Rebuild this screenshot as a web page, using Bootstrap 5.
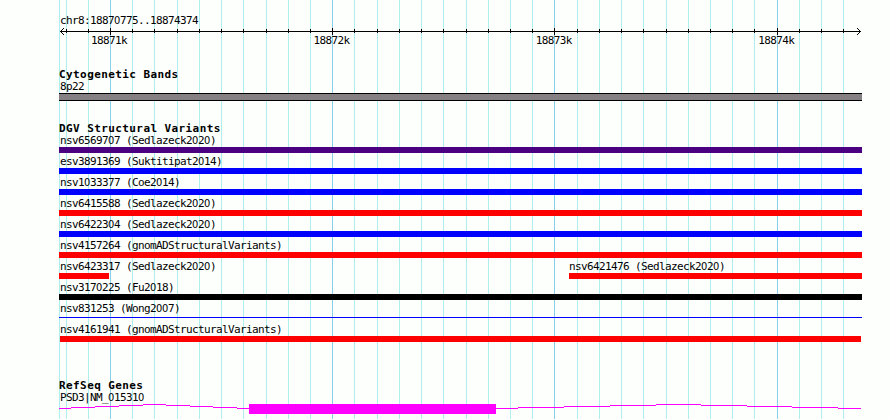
<!DOCTYPE html>
<html lang="en">
<head>
  <meta charset="UTF-8">
  <meta name="viewport" content="width=device-width,initial-scale=1">
  <title>chr8:18870775..18874374</title>
  <link href="https://cdn.jsdelivr.net/npm/bootstrap@5.3.2/dist/css/bootstrap.min.css" rel="stylesheet">
  <style>
    body {
      background: #fdfffc;
      color: #000;
      font-family: "DejaVu Sans Mono", "Liberation Mono", monospace;
      font-size: 11px;
      line-height: 12px;
      letter-spacing: -0.62px;
    }
    .browser-panel {
      width: 890px;
      height: 419px;
      padding-left: 59px;
    }
    .panel-grid { z-index: 0; }
    .panel-tracks {
      width: 803px;
      z-index: 1;
      padding-top: 15px;
    }
    .track-label {
      height: 12px;
      padding-left: 1px;
      white-space: pre;
    }
    .zero {
      font-family: "DejaVu Sans Condensed", "DejaVu Sans", sans-serif;
      letter-spacing: 0;
      text-indent: 0;
      display: inline-block;
      width: 6px;
    }
    .track-title {
      height: 12px;
      font-weight: bold;
      letter-spacing: 0.41px;
      white-space: pre;
    }
    .scale-axis { height: 7px; margin-top: 1px; }
    .scale-labels {
      height: 34px;
      padding-left: 32px;
      gap: 186px;
    }
    .scale-labels .track-label { width: 36.4px; padding-left: 0; }
    .band {
      height: 8px;
      background: #848084;
      border: solid #000;
      border-width: 1px 0;
    }
    .track-cytoband { height: 54px; }
    .track-variants { height: 257px; }
    .variant-row { height: 21px; }
    .variant-bar { height: 6px; }
    .variant-thin {
      height: 1px;
      margin-top: 2px;
    }
  </style>
</head>
<body>
  <div class="browser-panel position-relative overflow-hidden">
    <svg id="grid" class="panel-grid position-absolute top-0 start-0" width="890" height="419" shape-rendering="crispEdges"></svg>

    <div class="panel-tracks position-relative d-flex flex-column">
      <div class="track-label">chr8:18870775..18874374</div>
      <svg id="axis" class="scale-axis d-block" width="803" height="7" viewBox="59 28 803 7" shape-rendering="crispEdges"></svg>
      <div class="scale-labels d-flex">
        <div class="track-label">18871k</div>
        <div class="track-label">18872k</div>
        <div class="track-label">18873k</div>
        <div class="track-label">18874k</div>
      </div>

      <section class="track-cytoband">
        <div class="track-title">Cytogenetic Bands</div>
        <div class="track-label">8p22</div>
        <div class="band"></div>
      </section>

      <section class="track-variants">
        <div class="track-title">DGV Structural Variants</div>
        <div id="variants"></div>
      </section>

      <section>
        <div class="track-title">RefSeq Genes</div>
        <div class="track-label">PSD3|NM_015310</div>
        <svg id="gene" class="d-block" width="803" height="10" viewBox="59 404 803 10" shape-rendering="crispEdges"></svg>
      </section>
    </div>
  </div>

  <script src="https://cdn.jsdelivr.net/npm/bootstrap@5.3.2/dist/js/bootstrap.bundle.min.js"></script>
  <script>
    const MINOR = [66, 88, 132, 154, 177, 199, 221, 243, 266, 288, 310, 354, 377, 399, 421, 443, 466, 488,
      510, 532, 577, 599, 621, 643, 666, 688, 710, 732, 754, 799, 821, 843];
    const MAJOR = [110, 332, 554, 777];

    function rect(x, y, w, h, fill) {
      return `<rect x="${x}" y="${y}" width="${w}" height="${h}" fill="${fill}"/>`;
    }

    // Vertical guide lines
    document.getElementById('grid').innerHTML =
      [59].concat(MINOR).map(x => rect(x, 0, 1, 419, '#afeeee')).join('') +
      MAJOR.map(x => rect(x, 0, 1, 419, '#87ceeb')).join('');

    // Scale with an arrow head at each end
    let axis = rect(60, 31, 801, 1, '#000');
    axis += MINOR.map(x => rect(x, 29, 1, 4, '#000')).join('');
    axis += MAJOR.map(x => rect(x, 28, 1, 7, '#000')).join('');
    for (let i = 1; i < 4; i++) {
      axis += rect(60 + i, 31 - i, 1, 1, '#000') + rect(60 + i, 31 + i, 1, 1, '#000');
      axis += rect(860 - i, 31 - i, 1, 1, '#000') + rect(860 - i, 31 + i, 1, 1, '#000');
    }
    document.getElementById('axis').innerHTML = axis;

    // start and end are measured from the left edge of the tracks
    const rows = [
      [{ name: 'nsv6569707 (Sedlazeck2020)', color: '#4b0082', start: 0, end: 803 }],
      [{ name: 'esv3891369 (Suktitipat2014)', color: '#0000ff', start: 0, end: 803 }],
      [{ name: 'nsv1033377 (Coe2014)', color: '#0000ff', start: 0, end: 803 }],
      [{ name: 'nsv6415588 (Sedlazeck2020)', color: '#ff0000', start: 0, end: 803 }],
      [{ name: 'nsv6422304 (Sedlazeck2020)', color: '#0000ff', start: 0, end: 803 }],
      [{ name: 'nsv4157264 (gnomADStructuralVariants)', color: '#ff0000', start: 0, end: 803 }],
      [
        { name: 'nsv6423317 (Sedlazeck2020)', color: '#ff0000', start: 0, end: 50 },
        { name: 'nsv6421476 (Sedlazeck2020)', color: '#ff0000', start: 510, end: 803, shift: -1 }
      ],
      [{ name: 'nsv3170225 (Fu2018)', color: '#000000', start: 0, end: 803 }],
      [{ name: 'nsv831253 (Wong2007)', color: '#0000ff', start: 0, end: 803, thin: true }],
      [{ name: 'nsv4161941 (gnomADStructuralVariants)', color: '#ff0000', start: 1, end: 802, shift: -1 }]
    ];

    document.getElementById('variants').innerHTML = rows.map(row => {
      let pos = 0;
      const items = row.map(v => {
        const width = v.end - v.start;
        const html = `<div class="flex-shrink-0" style="width:${width}px;margin-left:${v.start - pos}px">
          <div class="track-label" style="text-indent:${v.shift || 0}px">${v.name}</div>
          <div class="${v.thin ? 'variant-thin' : 'variant-bar'}" style="background:${v.color}"></div>
        </div>`;
        pos = v.end;
        return html;
      });
      return `<div class="variant-row d-flex">${items.join('')}</div>`;
    }).join('');

    // Introns step up to the middle and back down, the exon is the solid box
    const steps = [
      [59, 71, 95, 119, 143, 166, 190, 213, 237, 249],
      [496, 518, 564, 610, 656, 701, 747, 792, 838, 861]
    ];
    let gene = rect(249, 404, 247, 10, '#ff00ff');
    steps.forEach(s => {
      for (let i = 0; i < 9; i++) {
        gene += rect(s[i], 404 + Math.abs(4 - i), s[i + 1] - s[i], 1, '#ff00ff');
      }
    });
    document.getElementById('gene').innerHTML = gene;

    // Plain zeros, the monospace face has a dotted one
    document.querySelectorAll('.track-label').forEach(el => {
      el.innerHTML = el.textContent.replace(/0/g, '<span class="zero">0</span>');
    });
  </script>
</body>
</html>
